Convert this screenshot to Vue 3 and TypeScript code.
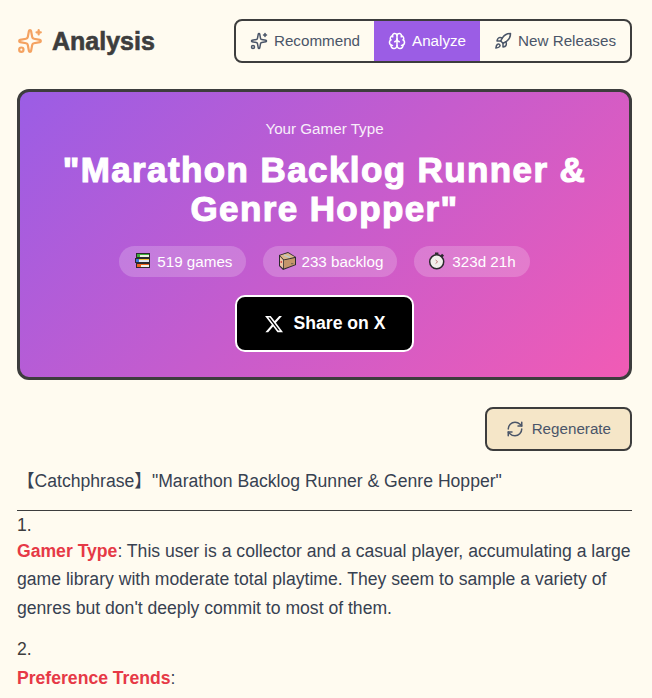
<script setup lang="ts">
const stats = [
  { kind: 'books', label: '519 games' },
  { kind: 'box', label: '233 backlog' },
  { kind: 'watch', label: '323d 21h' },
];
</script>

<template>
  <div class="page">
    <header class="top">
      <h1 class="heading">
        <svg class="spark" viewBox="0 0 24 24" fill="none" stroke="currentColor" stroke-width="2" stroke-linecap="round" stroke-linejoin="round">
          <path d="M11.017 2.814a1 1 0 0 1 1.966 0l1.051 5.558a2 2 0 0 0 1.594 1.594l5.558 1.051a1 1 0 0 1 0 1.966l-5.558 1.051a2 2 0 0 0-1.594 1.594l-1.051 5.558a1 1 0 0 1-1.966 0l-1.051-5.558a2 2 0 0 0-1.594-1.594l-5.558-1.051a1 1 0 0 1 0-1.966l5.558-1.051a2 2 0 0 0 1.594-1.594z" />
          <path d="M20 2v4" /><path d="M22 4h-4" /><circle cx="4" cy="20" r="2" />
        </svg>
        Analysis
      </h1>
      <nav class="tabs">
        <button class="tab">
          <svg class="tab-icon" viewBox="0 0 24 24" fill="none" stroke="currentColor" stroke-width="2" stroke-linecap="round" stroke-linejoin="round">
            <path d="M11.017 2.814a1 1 0 0 1 1.966 0l1.051 5.558a2 2 0 0 0 1.594 1.594l5.558 1.051a1 1 0 0 1 0 1.966l-5.558 1.051a2 2 0 0 0-1.594 1.594l-1.051 5.558a1 1 0 0 1-1.966 0l-1.051-5.558a2 2 0 0 0-1.594-1.594l-5.558-1.051a1 1 0 0 1 0-1.966l5.558-1.051a2 2 0 0 0 1.594-1.594z" />
            <path d="M20 2v4" /><path d="M22 4h-4" /><circle cx="4" cy="20" r="2" />
          </svg>
          Recommend
        </button>
        <button class="tab active">
          <svg class="tab-icon" viewBox="0 0 24 24" fill="none" stroke="currentColor" stroke-width="2" stroke-linecap="round" stroke-linejoin="round">
            <path d="M12 18V5" />
            <path d="M15 13a4.17 4.17 0 0 1-3-4 4.17 4.17 0 0 1-3 4" />
            <path d="M17.598 6.5A3 3 0 1 0 12 5a3 3 0 1 0-5.598 1.5" />
            <path d="M17.997 5.125a4 4 0 0 1 2.526 5.77" />
            <path d="M18 18a4 4 0 0 0 2-7.464" />
            <path d="M19.967 17.483A4 4 0 1 1 12 18a4 4 0 1 1-7.967-.517" />
            <path d="M6 18a4 4 0 0 1-2-7.464" />
            <path d="M6.003 5.125a4 4 0 0 0-2.526 5.77" />
          </svg>
          Analyze
        </button>
        <button class="tab">
          <svg class="tab-icon" viewBox="0 0 24 24" fill="none" stroke="currentColor" stroke-width="2" stroke-linecap="round" stroke-linejoin="round">
            <path d="M4.5 16.5c-1.5 1.26-2 5-2 5s3.74-.5 5-2c.71-.84.7-2.13-.09-2.91a2.18 2.18 0 0 0-2.91-.09z" />
            <path d="m12 15-3-3a22 22 0 0 1 2-3.95A12.88 12.88 0 0 1 22 2c0 2.72-.78 7.5-6 11a22.35 22.35 0 0 1-4 2z" />
            <path d="M9 12H4s.55-3.03 2-4c1.62-1.08 5 0 5 0" />
            <path d="M12 15v5s3.03-.55 4-2c1.08-1.62 0-5 0-5" />
          </svg>
          New Releases
        </button>
      </nav>
    </header>

    <section class="hero">
      <p class="hero-kicker">Your Gamer Type</p>
      <h2 class="hero-title">"Marathon Backlog Runner &amp; Genre Hopper"</h2>
      <div class="stats">
        <span v-for="s in stats" :key="s.kind" class="stat">
          <svg v-if="s.kind === 'books'" class="emoji" viewBox="0 0 19 19" shape-rendering="crispEdges">
            <!-- stack of three books, drawn on a dark outline -->
            <rect x="3" y="1" width="14" height="5" fill="#2c2a2e" />
            <rect x="4" y="2" width="12" height="1" fill="#3fae3a" />
            <rect x="4" y="3" width="3" height="2" fill="#3fae3a" />
            <rect x="7" y="3" width="9" height="2" fill="#f1f1e6" />
            <rect x="2" y="6" width="15" height="5" fill="#2c2a2e" />
            <rect x="3" y="7" width="3" height="3" fill="#3b78d8" />
            <rect x="6" y="7" width="10" height="1" fill="#f5c23c" />
            <rect x="6" y="8" width="10" height="2" fill="#dfe8f5" />
            <rect x="3" y="11" width="14" height="5" fill="#2c2a2e" />
            <rect x="4" y="12" width="12" height="1" fill="#f0641e" />
            <rect x="4" y="13" width="4" height="2" fill="#f0641e" />
            <rect x="8" y="13" width="8" height="2" fill="#f1f1e6" />
          </svg>
          <svg v-else-if="s.kind === 'box'" class="emoji" viewBox="0 0 19 19">
            <path d="M2 3 11 0 19 5V13L6 18 2 14Z" fill="#2c2a2e" />
            <path d="M3 3.6 11 1 17.8 5 6.8 7.4Z" fill="#dcb88c" />
            <path d="M3 4.6 6.2 8V16.4L3 13.6Z" fill="#eec6a4" />
            <path d="M7 8.2 18 5.9V12.4L7 16.6Z" fill="#c4966a" />
            <path d="M7 3 13 5.6" stroke="#b9cbd6" stroke-width="1.2" />
            <rect x="3.6" y="9" width="1.4" height="2" fill="#d9534f" />
            <rect x="14" y="11" width="2.4" height="1.2" fill="#7d6a58" />
          </svg>
          <svg v-else class="emoji" viewBox="0 0 19 19">
            <rect x="7" y="0.5" width="3.4" height="2.4" fill="#2c2a2e" />
            <rect x="13" y="2.4" width="2.6" height="2.2" fill="#2c2a2e" transform="rotate(40 14.3 3.5)" />
            <circle cx="8.7" cy="9.8" r="7" fill="#f2f0ec" stroke="#2c2a2e" stroke-width="1.5" />
            <path d="M7.6 8 9.6 9.8 7.6 11.6" fill="none" stroke="#b96a6a" stroke-width="0.9" />
          </svg>
          {{ s.label }}
        </span>
      </div>
      <button class="share">
        <svg class="x-logo" viewBox="0 0 24 24" fill="currentColor">
          <path d="M18.244 2.25h3.308l-7.227 8.26 8.502 11.24H16.17l-5.214-6.817L4.99 21.75H1.68l7.73-8.835L1.254 2.25H8.08l4.713 6.231zm-1.161 17.52h1.833L7.084 4.126H5.117z" />
        </svg>
        Share on X
      </button>
    </section>

    <div class="actions">
      <button class="regen">
        <svg class="regen-icon" viewBox="0 0 24 24" fill="none" stroke="currentColor" stroke-width="2" stroke-linecap="round" stroke-linejoin="round">
          <path d="M3 12a9 9 0 0 1 9-9 9.75 9.75 0 0 1 6.74 2.74L21 8" />
          <path d="M21 3v5h-5" />
          <path d="M21 12a9 9 0 0 1-9 9 9.75 9.75 0 0 1-6.74-2.74L3 16" />
          <path d="M8 16H3v5" />
        </svg>
        Regenerate
      </button>
    </div>

    <article class="report">
      <p class="catch">【Catchphrase】"Marathon Backlog Runner &amp; Genre Hopper"</p>
      <hr class="rule" />
      <p class="num first">1.</p>
      <p class="para"><strong>Gamer Type</strong>: This user is a collector and a casual player, accumulating a large game library with moderate total playtime. They seem to sample a variety of genres but don't deeply commit to most of them.</p>
      <p class="num second">2.</p>
      <p class="para"><strong>Preference Trends</strong>:</p>
    </article>
  </div>
</template>

<style>
html, body {
  margin: 0;
  background: #fffbf0;
  overflow: hidden;
}
</style>

<style scoped>
.page {
  box-sizing: border-box;
  height: 698px;
  overflow: hidden;
  padding: 19px 20px 0 17px;
  font-family: "Liberation Sans", Arial, sans-serif;
  color: #3d3d3d;
}

.top {
  display: flex;
  justify-content: space-between;
  align-items: center;
  margin-bottom: 26px;
}

.heading {
  display: flex;
  align-items: center;
  gap: 9px;
  margin: 0;
  font-size: 25px;
  font-weight: 700;
  -webkit-text-stroke: 0.6px currentColor;
  line-height: 44px;
}

.spark {
  width: 26px;
  height: 26px;
  color: #f4a261;
}

.tabs {
  display: flex;
  height: 44px;
  box-sizing: border-box;
  border: 2px solid #3d3d3d;
  border-radius: 8px;
  overflow: hidden;
  background: #fffbf0;
}

.tab {
  display: flex;
  align-items: center;
  gap: 6px;
  padding: 0 14px 1px;
  border: 0;
  background: none;
  font: inherit;
  font-size: 15.2px;
  color: #4a5568;
}

.tab.active {
  background: #9b5de5;
  color: #fff;
}

.tab-icon {
  width: 18px;
  height: 18px;
}

.hero {
  box-sizing: border-box;
  height: 291px;
  padding: 27px 24px 0;
  border: 3px solid #3d3d3d;
  border-radius: 12px;
  background: linear-gradient(135deg, #9b5de5, #f15bb5);
  color: #fff;
  text-align: center;
  display: flex;
  flex-direction: column;
  align-items: center;
}

.hero-kicker {
  margin: 0 0 11px;
  font-size: 15.2px;
  line-height: 20px;
  opacity: 0.9;
}

.hero-title {
  margin: 0 0 18px;
  padding: 0 10px;
  font-size: 35px;
  line-height: 39px;
  font-weight: 700;
  letter-spacing: 1.4px;
  -webkit-text-stroke: 1.1px #fff;
}

.stats {
  display: flex;
  justify-content: center;
  gap: 17px;
  margin-bottom: 18px;
}

.stat {
  display: flex;
  align-items: center;
  gap: 5px;
  height: 31px;
  padding: 0 14px;
  border-radius: 16px;
  background: rgba(255, 255, 255, 0.2);
  font-size: 15.2px;
}

.emoji {
  width: 19px;
  height: 19px;
}

.share {
  display: flex;
  align-items: center;
  gap: 10px;
  height: 57px;
  padding: 0 27px;
  box-sizing: border-box;
  border: 2px solid #fff;
  border-radius: 10px;
  background: #000;
  color: #fff;
  font: inherit;
  font-size: 17.6px;
  font-weight: 700;
}

.x-logo {
  width: 20px;
  height: 20px;
}

.actions {
  display: flex;
  justify-content: flex-end;
  margin-top: 27px;
}

.regen {
  display: flex;
  align-items: center;
  gap: 8px;
  height: 44px;
  padding: 0 19px 1px;
  box-sizing: border-box;
  border: 2px solid #3d3d3d;
  border-radius: 8px;
  background: #f5e6c8;
  color: #4a5568;
  font: inherit;
  font-size: 15.2px;
}

.regen-icon {
  width: 18px;
  height: 18px;
}

.report {
  margin-top: 16px;
  font-size: 17.6px;
  line-height: 28.5px;
  color: #374151;
}

.catch {
  margin: 0 0 14px;
  font-family: "Liberation Sans", "Noto Sans CJK SC", sans-serif;
}

.rule {
  margin: 0;
  border: 0;
  border-top: 1px solid #3d3d3d;
}

.num {
  margin: 0;
  color: #3d3d3d;
}

.num.first {
  margin-top: 2px;
  line-height: 24px;
}

.num.second {
  margin-top: 13px;
}

.para {
  margin: 0;
}

.para strong {
  color: #e63946;
  font-weight: 700;
}
</style>
